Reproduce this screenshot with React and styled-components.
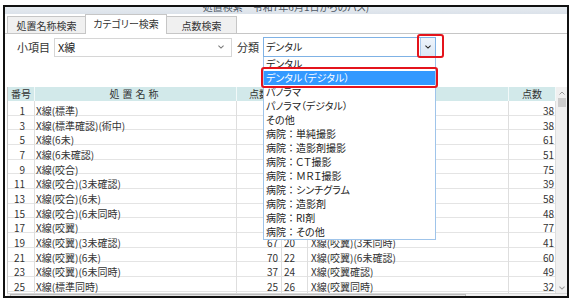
import React from 'react';
import styled, { createGlobalStyle } from 'styled-components';

const GlobalStyle = createGlobalStyle`
  html, body { margin: 0; padding: 0; background: #fff; }
  body {
    font-family: "Noto Sans CJK JP", "Noto Sans", sans-serif;
    font-size: 10px;
    color: #333;
  }
  * { box-sizing: border-box; }
`;

const Window = styled.div`
  margin: 5px 0 0 3px;
  width: 566px;
  height: 293px;
  border: 2px solid #111;
  display: flex;
  flex-direction: column;
  overflow: hidden;
  background: #fff;
`;

const TitleBar = styled.div`
  height: 7px;
  flex: none;
  background: linear-gradient(#e6ebf0, #dbe2ea);
  overflow: hidden;
  text-align: center;
`;

const TitleText = styled.div`
  margin-top: -6px;
  line-height: 12px;
  font-size: 10px;
  color: #4f5966;
  font-feature-settings: "palt";
`;

const TabStrip = styled.div`
  height: 20px;
  flex: none;
  display: flex;
  align-items: flex-end;
  padding-left: 2px;
  border-bottom: 1px solid #c6c6c6;
  background: #fff;
`;

const Tab = styled.div`
  width: ${(p) => p.$w}px;
  height: ${(p) => (p.$active ? 20 : 17)}px;
  margin-bottom: ${(p) => (p.$active ? -1 : 0)}px;
  margin-left: ${(p) => (p.$first ? 0 : -1)}px;
  border: 1px solid #c6c6c6;
  border-bottom: none;
  background: ${(p) => (p.$active ? '#fff' : '#f0f0f0')};
  display: flex;
  align-items: center;
  justify-content: center;
  padding-bottom: ${(p) => (p.$active ? 2 : 0)}px;
  font-size: 10px;
  color: #333;
  font-feature-settings: "palt";
  white-space: nowrap;
`;

const Panel = styled.div`
  flex: 1;
  display: flex;
  flex-direction: column;
  background: #fff;
  min-height: 0;
`;

const FilterRow = styled.div`
  height: 20px;
  flex: none;
  display: flex;
  align-items: center;
  margin: 3px 0 0 12px;
`;

const Label = styled.span`
  font-size: 11px;
  color: #333;
  margin: ${(p) => p.$m};
  white-space: nowrap;
`;

const SelectBox = styled.div`
  width: 178px;
  height: 19px;
  border: 1px solid #d6d6d6;
  display: flex;
  align-items: center;
  justify-content: space-between;
  padding: 0 7px 0 3px;
  font-size: 11px;
  color: #222;
  background: #fff;
`;

const ComboWrap = styled.div`
  position: relative;
  width: 173px;
  height: 20px;
`;

const Combo = styled.div`
  height: 100%;
  display: flex;
  border: 1px solid #7fb2e5;
  background: #fff;
`;

const ComboText = styled.div`
  flex: 1;
  padding-left: 2px;
  line-height: 17px;
  font-size: 10px;
  color: #222;
  font-feature-settings: "palt";
`;

const ComboButton = styled.div`
  width: 15px;
  border-left: 1px solid #a8c9ec;
  background: linear-gradient(#eef4fb, #dbe7f4);
  display: flex;
  align-items: center;
  justify-content: center;
`;

const DropList = styled.div`
  position: absolute;
  top: 100%;
  left: 0;
  width: 173px;
  border: 1px solid #9fc4ea;
  border-top: none;
  background: #fff;
  z-index: 5;
`;

const DropItem = styled.div`
  height: 14px;
  line-height: 14px;
  padding-left: 2px;
  font-size: 10px;
  white-space: nowrap;
  font-feature-settings: "palt";
  background: ${(p) => (p.$sel ? '#3399ff' : 'transparent')};
  color: ${(p) => (p.$sel ? '#fff' : '#222')};
`;

const Colon = styled.span`
  font-feature-settings: normal;
`;

const RedMark = styled.div`
  position: absolute;
  left: ${(p) => p.$x}px;
  top: ${(p) => p.$y}px;
  width: ${(p) => p.$w}px;
  height: ${(p) => p.$h}px;
  border: 2px solid #e4141c;
  border-radius: 3px;
  z-index: 6;
  pointer-events: none;
`;

const GridArea = styled.div`
  margin: 30px 0 0 2px;
  flex: 1;
  display: flex;
  flex-direction: column;
  min-height: 0;
`;

const GridBody = styled.div`
  height: 206px;
  flex: none;
  display: flex;
`;

const Table = styled.div`
  flex: 1;
  border-left: 1px solid #c8c8c8;
  overflow: hidden;
`;

const COLS = '27px 202px 45px 26px 201px 47px';

const HeadRow = styled.div`
  display: grid;
  grid-template-columns: ${COLS};
  height: 14px;
  background: #d2e9ea;
`;

const HeadCell = styled.div`
  border-right: 1px solid #f2f9f9;
  text-align: center;
  line-height: 14px;
  font-size: 10px;
  color: #333;
  letter-spacing: ${(p) => p.$ls || 0}px;
  white-space: nowrap;
  overflow: hidden;
`;

const Row = styled.div`
  display: grid;
  grid-template-columns: ${COLS};
  height: 14.67px;
  border-bottom: 1px solid #e4e4e4;
`;

const Cell = styled.div`
  border-right: 1px solid #dedede;
  padding-top: 3px;
  line-height: 14px;
  font-size: 10px;
  color: #333;
  white-space: nowrap;
  text-align: ${(p) => p.$align || 'left'};
  padding-right: ${(p) => p.$pr || 0}px;
  padding-left: ${(p) => p.$pl || 0}px;
`;

const VScroll = styled.div`
  width: 11px;
  flex: none;
  background: #f0f0f0;
  display: flex;
  flex-direction: column;
  align-items: center;
`;

const Arrow = styled.div`
  height: 11px;
  width: 11px;
  display: flex;
  align-items: center;
  justify-content: center;
`;

const Thumb = styled.div`
  width: 8px;
  height: 9px;
  background: #cdcdcd;
`;

const Spacer = styled.div`
  flex: 1;
`;

const HScroll = styled.div`
  height: 4px;
  flex: none;
  background: #f0f0f0;
  border-top: 1px solid #d8d8d8;
  padding-left: 3px;
`;

const HThumb = styled.div`
  width: 456px;
  height: 100%;
  border: 1px solid #bdbdbd;
  border-bottom: none;
  background: #e6e6e6;
`;

const Chevron = ({ color = '#333', w = 7, h = 4 }) => (
  <svg width={w} height={h} viewBox="0 0 7 4">
    <path d="M0.5 0.5 L3.5 3.3 L6.5 0.5" fill="none" stroke={color} strokeWidth="1.2" />
  </svg>
);

const ChevronUp = ({ color = '#999' }) => (
  <svg width="6" height="4" viewBox="0 0 6 4">
    <path d="M0.5 3.5 L3 1 L5.5 3.5" fill="none" stroke={color} strokeWidth="1" />
  </svg>
);

const items = [
  'デンタル',
  'デンタル（デジタル）',
  'パノラマ',
  'パノラマ（デジタル）',
  'その他',
  '病院：単純撮影',
  '病院：造影剤撮影',
  '病院：ＣＴ撮影',
  '病院：ＭＲＩ撮影',
  '病院：シンチグラム',
  '病院：造影剤',
  '病院：RI剤',
  '病院：その他',
];

const rows = [
  [1, 'X線(標準)', 58, 2, 'X線(標準)(術中)', 38],
  [3, 'X線(標準確認)(術中)', 58, 4, 'X線(標準確認)', 38],
  [5, 'X線(6未)', 63, 6, 'X線(3未)', 61],
  [7, 'X線(6未確認)', 55, 8, 'X線(3未確認)', 51],
  [9, 'X線(咬合)', 57, 10, 'X線(咬合確認)', 75],
  [11, 'X線(咬合)(3未確認)', 38, 12, 'X線(咬合)(3未)', 39],
  [13, 'X線(咬合)(6未)', 58, 14, 'X線(咬合)(6未確認)', 58],
  [15, 'X線(咬合)(6未同時)', 48, 16, 'X線(咬合同時)', 48],
  [17, 'X線(咬翼)', 63, 18, 'X線(咬翼)(3未)', 77],
  [19, 'X線(咬翼)(3未確認)', 67, 20, 'X線(咬翼)(3未同時)', 41],
  [21, 'X線(咬翼)(6未)', 70, 22, 'X線(咬翼)(6未確認)', 60],
  [23, 'X線(咬翼)(6未同時)', 37, 24, 'X線(咬翼確認)', 49],
  [25, 'X線(標準同時)', 25, 26, 'X線(咬翼同時)', 32],
];

const renderItem = (t) => {
  const parts = t.split('：');
  if (parts.length === 1) return t;
  return (
    <>
      {parts[0]}
      <Colon>：</Colon>
      {parts[1]}
    </>
  );
};

export default function App() {
  return (
    <>
      <GlobalStyle />
      <Window>
        <TitleBar>
          <TitleText>処置検索　令和7年6月1日からのパス)</TitleText>
        </TitleBar>
        <TabStrip>
          <Tab $w={79} $first>処置名称検索</Tab>
          <Tab $w={82} $active>カテゴリー検索</Tab>
          <Tab $w={71}>点数検索</Tab>
        </TabStrip>
        <Panel>
          <FilterRow>
            <Label $m="0 4px 0 0">小項目</Label>
            <SelectBox>
              <span>X線</span>
              <Chevron color="#777" w={6} h={4} />
            </SelectBox>
            <Label $m="0 4px 0 5px">分類</Label>
            <ComboWrap>
              <Combo>
                <ComboText>デンタル</ComboText>
                <ComboButton>
                  <Chevron color="#222" w={6} h={4} />
                </ComboButton>
              </Combo>
              <DropList>
                {items.map((t, i) => (
                  <DropItem key={t} $sel={i === 1}>
                    {renderItem(t)}
                  </DropItem>
                ))}
              </DropList>
              <RedMark $x={154} $y={-3} $w={27} $h={24} />
              <RedMark $x={-2} $y={30} $w={177} $h={21} />
            </ComboWrap>
          </FilterRow>
          <GridArea>
            <GridBody>
              <Table>
                <HeadRow>
                  <HeadCell>番号</HeadCell>
                  <HeadCell $ls={3}>処置名称</HeadCell>
                  <HeadCell>点数</HeadCell>
                  <HeadCell>番号</HeadCell>
                  <HeadCell $ls={3}>処置名称</HeadCell>
                  <HeadCell>点数</HeadCell>
                </HeadRow>
                {rows.map((r) => (
                  <Row key={r[0]}>
                    <Cell $align="right" $pr={9}>{r[0]}</Cell>
                    <Cell $pl={1}>{r[1]}</Cell>
                    <Cell $align="right" $pr={3}>{r[2]}</Cell>
                    <Cell $align="right" $pr={12}>{r[3]}</Cell>
                    <Cell $pl={3}>{r[4]}</Cell>
                    <Cell $align="right" $pr={1}>{r[5]}</Cell>
                  </Row>
                ))}
              </Table>
              <VScroll>
                <Arrow>
                  <ChevronUp />
                </Arrow>
                <Thumb />
                <Spacer />
                <Arrow>
                  <Chevron color="#999" w={6} h={4} />
                </Arrow>
              </VScroll>
            </GridBody>
            <HScroll>
              <HThumb />
            </HScroll>
          </GridArea>
        </Panel>
      </Window>
    </>
  );
}
